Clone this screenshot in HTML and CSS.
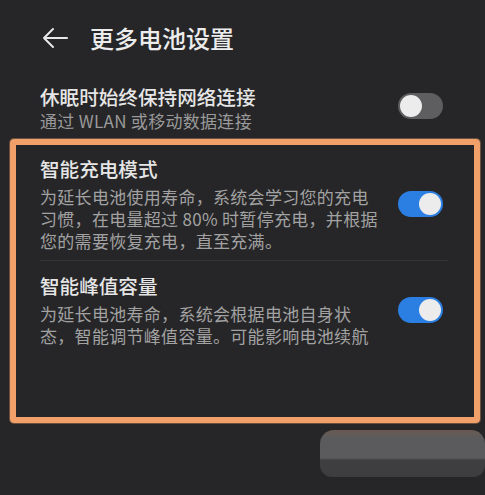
FILE: index.html
```html
<!DOCTYPE html>
<html lang="zh-CN">
<head>
<meta charset="utf-8">
<title>更多电池设置</title>
<link rel="stylesheet" href="styles.css">
</head>
<body>
<div class="screen">
  <div class="header">
    <svg class="back" width="26" height="22" viewBox="0 0 26 22">
      <path d="M25 11 H2 M11 2 L2 11 L11 20" fill="none" stroke="#e6e6e6" stroke-width="2" stroke-linecap="round" stroke-linejoin="round"/>
    </svg>
    <div class="page-title">更多电池设置</div>
  </div>

  <div class="row row-top">
    <div class="text">
      <div class="title">休眠时始终保持网络连接</div>
      <div class="sub">通过 WLAN 或移动数据连接</div>
    </div>
    <div class="toggle off"><span class="knob"></span></div>
  </div>

  <div class="box">
    <div class="row item">
      <div class="text">
        <div class="title">智能充电模式</div>
        <div class="desc">为延长电池使用寿命，系统会学习您的充电<br>习惯，在电量超过 80% 时暂停充电，并根据<br>您的需要恢复充电，直至充满。</div>
      </div>
      <div class="toggle on"><span class="knob"></span></div>
    </div>
    <div class="divider"></div>
    <div class="row item">
      <div class="text">
        <div class="title">智能峰值容量</div>
        <div class="desc">为延长电池寿命，系统会根据电池自身状<br>态，智能调节峰值容量。可能影响电池续航</div>
      </div>
      <div class="toggle on"><span class="knob"></span></div>
    </div>
  </div>

  <div class="footer">
    <div class="blur"></div>
  </div>
</div>
</body>
</html>
```

FILE: styles.css
```css
html, body {
  margin: 0;
  padding: 0;
  background: #262628;
}
.screen {
  width: 485px;
  height: 495px;
  overflow: hidden;
  background: #262628;
  font-family: "Noto Sans CJK SC", "Noto Sans", sans-serif;
  color: #e8e8e8;
}
.header {
  display: flex;
  align-items: center;
  height: 32px;
  margin-top: 22px;
  padding-left: 42px;
}
.back {
  display: block;
}
.page-title {
  margin-left: 22px;
  font-size: 24px;
  line-height: 32px;
  font-weight: 500;
  color: #ececec;
}
.row {
  display: flex;
  align-items: center;
  justify-content: space-between;
}
.row-top {
  margin-top: 30px;
  padding: 0 42px 0 40px;
}
.title {
  font-size: 19.6px;
  line-height: 26px;
  font-weight: 500;
  color: #e6e6e6;
}
.sub {
  font-size: 17px;
  line-height: 22px;
  letter-spacing: 0.3px;
  color: #9a9a9a;
}
.desc {
  margin-top: 4px;
  font-size: 17px;
  line-height: 22px;
  letter-spacing: 0.3px;
  color: #a2a2a2;
}
.toggle {
  position: relative;
  width: 45px;
  height: 26px;
  border-radius: 13px;
  flex-shrink: 0;
}
.toggle .knob {
  position: absolute;
  top: 2px;
  width: 22px;
  height: 22px;
  border-radius: 50%;
  background: #ececec;
}
.toggle.off {
  background: #5e5e60;
  margin-top: -5px;
}
.toggle.off .knob {
  left: 2px;
}
.toggle.on {
  background: #2c7fe2;
}
.toggle.on .knob {
  right: 2px;
}
.box {
  box-sizing: border-box;
  width: 470px;
  height: 284px;
  margin: 7px 0 0 10px;
  border: 6px solid #f2a06a;
  border-radius: 4px;
  box-shadow: 0 0 0 1px rgba(242, 160, 106, 0.35);
}
.item {
  padding: 11px 31px 0 24px;
}
.item:first-child {
  padding-bottom: 8px;
}
.divider {
  height: 1px;
  margin: 0 26px 0 24px;
  background: #343437;
}
.item + .divider + .item {
  padding-top: 12px;
}
.footer {
  display: flex;
  justify-content: flex-end;
  margin-top: 7px;
}
.blur {
  width: 165px;
  height: 47px;
  border-radius: 14px 14px 12px 12px;
  background: linear-gradient(to bottom, #6a5a52 0px, #5b5b5d 8px, #5a5a5c 28px, #3f3f42 30px, #3d3d40 47px);
}
```
